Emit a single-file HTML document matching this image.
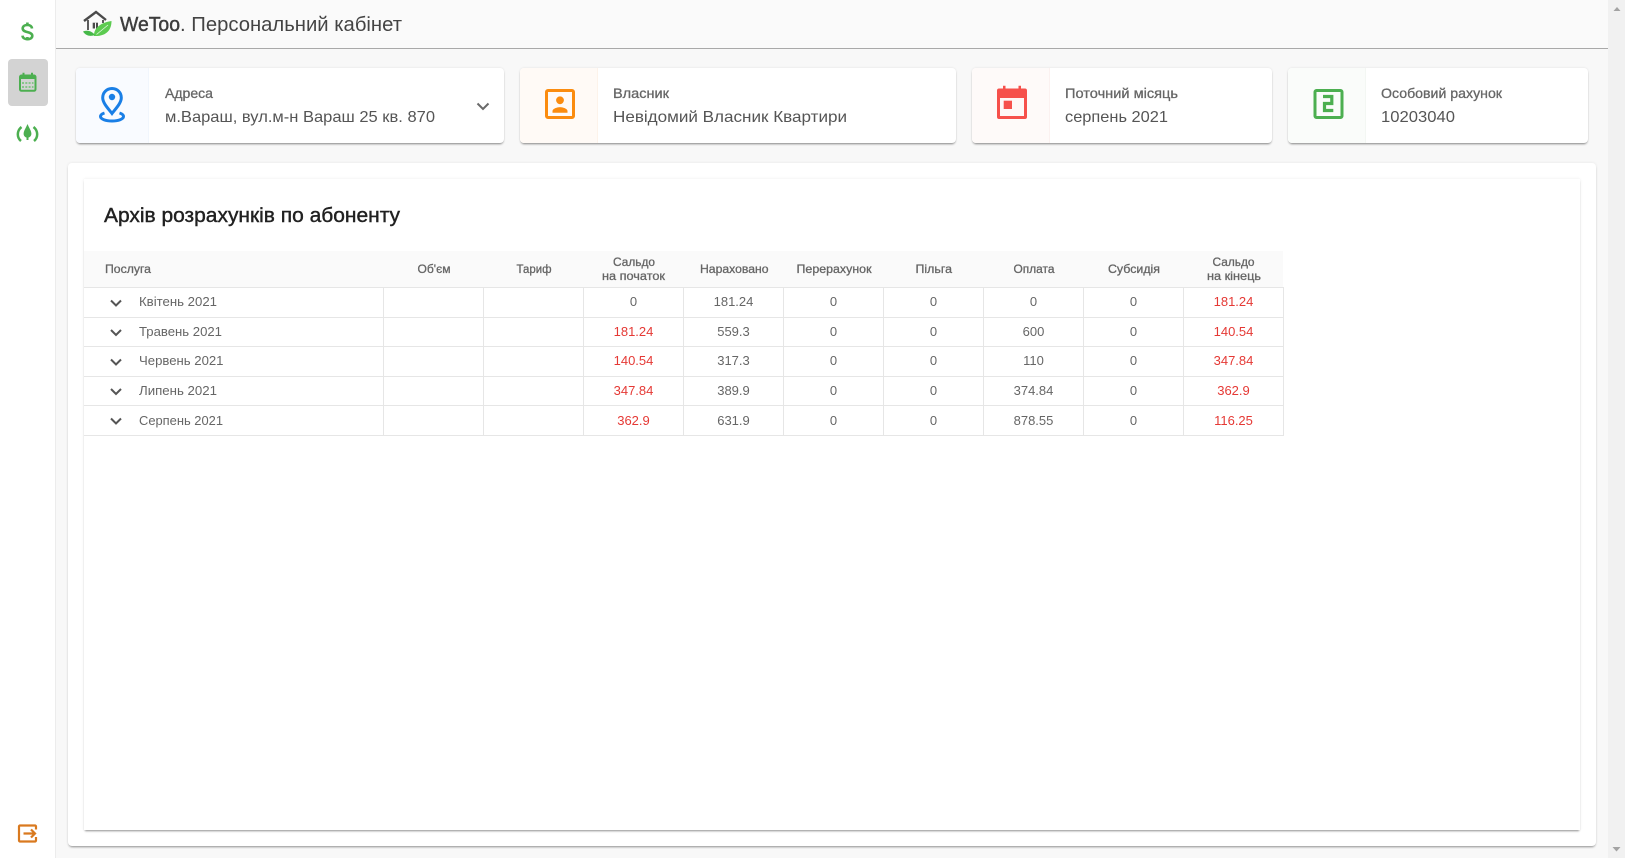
<!DOCTYPE html>
<html lang="uk">
<head>
<meta charset="utf-8">
<title>WeToo. Персональний кабінет</title>
<style>
html,body{margin:0;padding:0;width:1625px;height:858px;overflow:hidden;background:#f8f8f8;font-family:"Liberation Sans",sans-serif}
.abs{position:absolute;box-sizing:border-box}
.side{left:0;top:0;width:56px;height:858px;background:#fff;border-right:1px solid #ececec}
.act{left:8px;top:59px;width:40px;height:47px;background:#d3d3d3;border-radius:4px}
.head{left:56px;top:0;width:1552px;height:49px;background:#fafafa;border-bottom:1px solid #a9a9a9}
.sb{left:1608px;top:0;width:17px;height:858px;background:#f1f1f1}
.card{top:68px;height:75px;background:#fff;border-radius:4px;box-shadow:0 2px 2px -1px rgba(0,0,0,.45),0 0 2px rgba(0,0,0,.1);overflow:hidden}
.ic{left:0;top:0;height:75px}
.outer{left:68px;top:163px;width:1528px;height:683px;background:#fff;border-radius:4px;box-shadow:0 2px 2px -1px rgba(0,0,0,.4),0 0 3px rgba(0,0,0,.08)}
.inner{left:84px;top:179px;width:1496px;height:651px;background:#fff;box-shadow:0 2px 2px -1px rgba(0,0,0,.42),0 0 3px rgba(0,0,0,.08)}
.thd{left:84px;top:251px;width:1199px;height:36px;background:#fafafa}
svg{position:absolute;left:0;top:0}
text{font-family:"Liberation Sans",sans-serif}
.lb{font-size:14px;fill:#666;stroke:#666;stroke-width:.3}
.val{font-size:16px;fill:#555}
.th{font-size:12px;fill:#666;stroke:#666;stroke-width:.3}
.td{font-size:13px;fill:#666;text-anchor:middle}
.r{fill:#e53935}
.m{font-size:13px;fill:#666}
</style>
</head>
<body>
<div class="abs side"></div>
<div class="abs act"></div>
<div class="abs head"></div>
<div class="abs sb"></div>

<div class="abs card" style="left:76px;width:428px"><div class="abs ic" style="width:73px;background:#f9fbff;border-right:1px solid #f1f6fd"></div></div>
<div class="abs card" style="left:520px;width:436px"><div class="abs ic" style="width:78px;background:#fffaf6;border-right:1px solid #fdf3ea"></div></div>
<div class="abs card" style="left:972px;width:300px"><div class="abs ic" style="width:78px;background:#fefaf9;border-right:1px solid #fbf1f0"></div></div>
<div class="abs card" style="left:1288px;width:300px"><div class="abs ic" style="width:78px;background:#fafcfa;border-right:1px solid #f3f7f3"></div></div>

<div class="abs outer"></div>
<div class="abs inner"></div>
<div class="abs thd"></div>

<svg width="1625" height="858" viewBox="0 0 1625 858">
  <!-- scrollbar arrows -->
  <path d="M1613.5 11h7l-3.5-4z" fill="#a3a3a3"/>
  <path d="M1612.5 847h8l-4 4.5z" fill="#a3a3a3"/>

  <!-- sidebar icons -->
  <g fill="none" stroke="#4caf50">
    <path stroke-width="2.6" d="M32 28.500c-.2-2.200-2-3.500-4.600-3.500-2.800 0-4.700 1.400-4.700 3.500 0 4.700 9.600 2.600 9.600 7.300 0 2.100-2 3.400-4.900 3.400-2.800 0-4.700-1.400-4.900-3.600"/>
    <path stroke-width="2.600" d="M27.400 22.500v3M27.400 37v3.200"/>
    <rect x="20" y="75.500" width="15.500" height="15.300" rx="1.500" stroke-width="2"/>
    <path stroke-width="3" d="M20 77.500h15.500"/>
    <path stroke-width="2" d="M23.500 72.800v3M32 72.800v3"/>
    <path stroke-width="1.800" stroke="#7cc47f" stroke-dasharray="2 1.300" d="M22 83h11.500M22 87h11.500"/>
    <path stroke-width="2.500" d="M21.500 127c-4.800 3.800-4.800 10.400-.5 14M33.500 127c4.800 3.800 4.800 10.400.5 14"/>
  </g>
  <path d="M27.500 124c1.800 4.400 3.900 6.800 3.900 9.800 0 2.200-1.700 3.900-3.900 3.900s-3.900-1.700-3.900-3.900c0-3 2.100-5.400 3.900-9.800z M26.500 137h2v3h-2z" fill="#4caf50"/>
  <g fill="none" stroke="#d9791f" stroke-width="2.200">
    <path d="M36 829.500v-3a1 1 0 0 0-1-1H20a1 1 0 0 0-1 1v14a1 1 0 0 0 1 1h15a1 1 0 0 0 1-1v-3.500"/>
    <path d="M23.500 833.500H35M31 829.500l4 4-4 4"/>
  </g>

  <!-- logo -->
  <path d="M84 21 96 12l10 8" fill="none" stroke="#4a4a4a" stroke-width="2.400"/>
  <path d="M88 20v10M103 20v3" fill="none" stroke="#4a4a4a" stroke-width="1.800"/>
  <path d="M92.700 22.700h5.300v5.800h-5.300z" fill="#4a4a4a"/><path d="M95 22.700h1v5.800h-1z" fill="#fafafa"/>
  <path d="M94 36c-.5-8 7-13.500 17.500-15 0 8-4 15.500-17.500 15z" fill="#5ccb50"/>
  <path d="M96.500 34.500 108 25" stroke="#e4f6e2" stroke-width=".8" fill="none"/>
  <path d="M83 31.500c4-1.500 8.500-.8 12 3.500-4.500 1.800-9.500.8-12-3.500z" fill="#45b848"/>

  <text x="120" y="31" font-size="20" fill="#3d3d3d" stroke="#3d3d3d" stroke-width=".45" textLength="60" lengthAdjust="spacingAndGlyphs">WeToo</text>
  <text x="180" y="31" font-size="20" fill="#444" textLength="222" lengthAdjust="spacingAndGlyphs">. Персональний кабінет</text>

  <!-- card icons -->
  <g fill="none" stroke="#1a7fe6" stroke-width="3">
    <path d="M112 88.500c-5.300 0-9.300 4.100-9.300 9.300 0 5.200 5.400 10.700 9.300 15.700 3.900-5 9.300-10.500 9.300-15.700 0-5.200-4-9.300-9.300-9.300z"/>
    <path d="M104.500 113c-2.600.8-4 2-4 3.400 0 2.700 5.200 4.600 11.500 4.600s11.500-1.900 11.500-4.600c0-1.400-1.400-2.600-4-3.400"/>
  </g>
  <circle cx="112" cy="97" r="3.200" fill="#1a7fe6"/>

  <rect x="546.500" y="90.500" width="27" height="27" rx="1.500" fill="none" stroke="#fb8c0f" stroke-width="3"/>
  <circle cx="560" cy="100.300" r="3.900" fill="#fb8c0f"/>
  <path d="M552.500 112.700v-1.700c0-2.500 5-3.900 7.500-3.900s7.500 1.400 7.500 3.900v1.700z" fill="#fb8c0f"/>

  <path d="M999 88.500h4v-2.800h2.500v2.800h13v-2.800h2.500v2.800h4c1.200 0 2 .8 2 2v26.500c0 1.200-.8 2-2 2h-26c-1.200 0-2-.8-2-2V90.500c0-1.200.8-2 2-2z" fill="#f6504b"/>
  <rect x="1000" y="98" width="24" height="18" fill="#fef7f6"/>
  <rect x="1003.700" y="100.700" width="8.300" height="8.300" fill="#f6504b"/>

  <rect x="1315" y="90.500" width="27" height="27" rx="1.500" fill="none" stroke="#4caf50" stroke-width="3"/>
  <path d="M1323 96.500h8.800v7h-7.300v7h8.800" fill="none" stroke="#4caf50" stroke-width="3.200"/>

  <!-- card texts -->
  <text class="lb" x="165" y="98" textLength="48" lengthAdjust="spacingAndGlyphs">Адреса</text>
  <text class="val" x="165" y="122" textLength="270" lengthAdjust="spacingAndGlyphs">м.Вараш, вул.м-н Вараш 25 кв. 870</text>
  <path d="M477.500 103.500l5.500 5.500 5.500-5.500" fill="none" stroke="#6a6a6a" stroke-width="2"/>
  <text class="lb" x="613" y="98" textLength="56" lengthAdjust="spacingAndGlyphs">Власник</text>
  <text class="val" x="613" y="122" textLength="234" lengthAdjust="spacingAndGlyphs">Невідомий Власник Квартири</text>
  <text class="lb" x="1065" y="98" textLength="113" lengthAdjust="spacingAndGlyphs">Поточний місяць</text>
  <text class="val" x="1065" y="122" textLength="103" lengthAdjust="spacingAndGlyphs">серпень 2021</text>
  <text class="lb" x="1381" y="98" textLength="121" lengthAdjust="spacingAndGlyphs">Особовий рахунок</text>
  <text class="val" x="1381" y="122" textLength="74" lengthAdjust="spacingAndGlyphs">10203040</text>

  <!-- title -->
  <text x="104" y="222" font-size="20" fill="#212121" stroke="#212121" stroke-width=".4" textLength="296" lengthAdjust="spacingAndGlyphs">Архів розрахунків по абоненту</text>

  <!-- table lines -->
  <g stroke="#e6e6e6" stroke-width="1">
    <path d="M84 287.500h1199M84 317.500h1199M84 346.500h1199M84 376.500h1199M84 405.500h1199M84 435.500h1199"/>
    <path d="M383.500 287v149M483.500 287v149M583.500 287v149M683.500 287v149M783.500 287v149M883.500 287v149M983.500 287v149M1083.500 287v149M1183.500 287v149M1283.500 287v149"/>
  </g>

  <!-- table head -->
  <text class="th" x="105" y="273" textLength="46" lengthAdjust="spacingAndGlyphs">Послуга</text>
  <text class="th" x="417.500" y="273" textLength="33" lengthAdjust="spacingAndGlyphs">Об'єм</text>
  <text class="th" x="516.500" y="273" textLength="35" lengthAdjust="spacingAndGlyphs">Тариф</text>
  <text class="th" x="613" y="266" textLength="42" lengthAdjust="spacingAndGlyphs">Сальдо</text>
  <text class="th" x="602" y="280" textLength="63" lengthAdjust="spacingAndGlyphs">на початок</text>
  <text class="th" x="700" y="273" textLength="68.500" lengthAdjust="spacingAndGlyphs">Нараховано</text>
  <text class="th" x="796.500" y="273" textLength="75" lengthAdjust="spacingAndGlyphs">Перерахунок</text>
  <text class="th" x="915.500" y="273" textLength="36.500" lengthAdjust="spacingAndGlyphs">Пільга</text>
  <text class="th" x="1013.500" y="273" textLength="41" lengthAdjust="spacingAndGlyphs">Оплата</text>
  <text class="th" x="1108" y="273" textLength="52" lengthAdjust="spacingAndGlyphs">Субсидія</text>
  <text class="th" x="1212.500" y="266" textLength="42" lengthAdjust="spacingAndGlyphs">Сальдо</text>
  <text class="th" x="1207" y="280" textLength="54" lengthAdjust="spacingAndGlyphs">на кінець</text>

  <!-- chevrons -->
  <g fill="none" stroke="#555" stroke-width="2">
    <path d="M111 300.500l5 5 5-5M111 330l5 5 5-5M111 359.500l5 5 5-5M111 389l5 5 5-5M111 418.500l5 5 5-5"/>
  </g>

  <!-- rows -->
  <text class="m" x="139" y="306" textLength="78" lengthAdjust="spacingAndGlyphs">Квітень 2021</text>
  <text class="td" x="633.500" y="306">0</text><text class="td" x="733.500" y="306">181.24</text><text class="td" x="833.500" y="306">0</text><text class="td" x="933.500" y="306">0</text><text class="td" x="1033.500" y="306">0</text><text class="td" x="1133.500" y="306">0</text><text class="td r" x="1233.500" y="306">181.24</text>

  <text class="m" x="139" y="336" textLength="83" lengthAdjust="spacingAndGlyphs">Травень 2021</text>
  <text class="td r" x="633.500" y="336">181.24</text><text class="td" x="733.500" y="336">559.3</text><text class="td" x="833.500" y="336">0</text><text class="td" x="933.500" y="336">0</text><text class="td" x="1033.500" y="336">600</text><text class="td" x="1133.500" y="336">0</text><text class="td r" x="1233.500" y="336">140.54</text>

  <text class="m" x="139" y="365" textLength="84.500" lengthAdjust="spacingAndGlyphs">Червень 2021</text>
  <text class="td r" x="633.500" y="365">140.54</text><text class="td" x="733.500" y="365">317.3</text><text class="td" x="833.500" y="365">0</text><text class="td" x="933.500" y="365">0</text><text class="td" x="1033.500" y="365">110</text><text class="td" x="1133.500" y="365">0</text><text class="td r" x="1233.500" y="365">347.84</text>

  <text class="m" x="139" y="395" textLength="78" lengthAdjust="spacingAndGlyphs">Липень 2021</text>
  <text class="td r" x="633.500" y="395">347.84</text><text class="td" x="733.500" y="395">389.9</text><text class="td" x="833.500" y="395">0</text><text class="td" x="933.500" y="395">0</text><text class="td" x="1033.500" y="395">374.84</text><text class="td" x="1133.500" y="395">0</text><text class="td r" x="1233.500" y="395">362.9</text>

  <text class="m" x="139" y="425" textLength="84" lengthAdjust="spacingAndGlyphs">Серпень 2021</text>
  <text class="td r" x="633.500" y="425">362.9</text><text class="td" x="733.500" y="425">631.9</text><text class="td" x="833.500" y="425">0</text><text class="td" x="933.500" y="425">0</text><text class="td" x="1033.500" y="425">878.55</text><text class="td" x="1133.500" y="425">0</text><text class="td r" x="1233.500" y="425">116.25</text>
</svg>
</body>
</html>
